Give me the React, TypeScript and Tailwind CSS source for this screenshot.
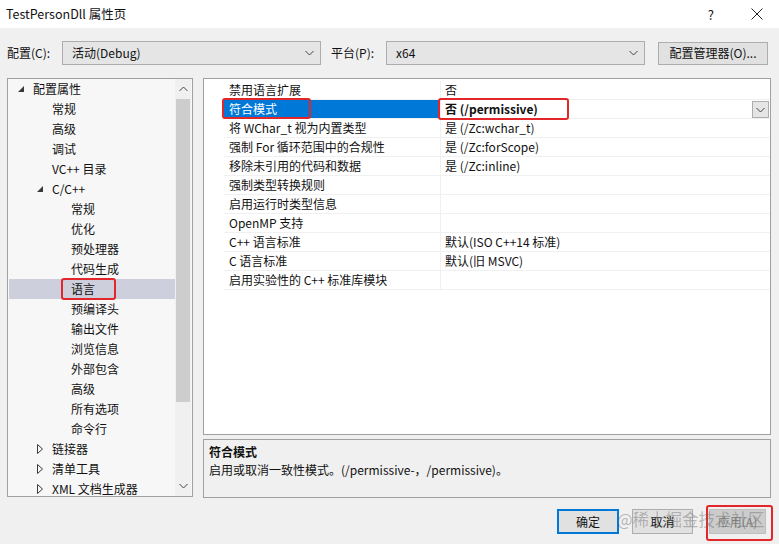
import React from "react";

type TreeItem = { t: string; lvl: number; arrow?: "open" | "closed"; sel?: boolean };

const tree: TreeItem[] = [
  { t: "配置属性", lvl: 0, arrow: "open" },
  { t: "常规", lvl: 1 },
  { t: "高级", lvl: 1 },
  { t: "调试", lvl: 1 },
  { t: "VC++ 目录", lvl: 1 },
  { t: "C/C++", lvl: 1, arrow: "open" },
  { t: "常规", lvl: 2 },
  { t: "优化", lvl: 2 },
  { t: "预处理器", lvl: 2 },
  { t: "代码生成", lvl: 2 },
  { t: "语言", lvl: 2, sel: true },
  { t: "预编译头", lvl: 2 },
  { t: "输出文件", lvl: 2 },
  { t: "浏览信息", lvl: 2 },
  { t: "外部包含", lvl: 2 },
  { t: "高级", lvl: 2 },
  { t: "所有选项", lvl: 2 },
  { t: "命令行", lvl: 2 },
  { t: "链接器", lvl: 1, arrow: "closed" },
  { t: "清单工具", lvl: 1, arrow: "closed" },
  { t: "XML 文档生成器", lvl: 1, arrow: "closed" },
];

const props: { n: string; v: string; sel?: boolean }[] = [
  { n: "禁用语言扩展", v: "否" },
  { n: "符合模式", v: "否 (/permissive)", sel: true },
  { n: "将 WChar_t 视为内置类型", v: "是 (/Zc:wchar_t)" },
  { n: "强制 For 循环范围中的合规性", v: "是 (/Zc:forScope)" },
  { n: "移除未引用的代码和数据", v: "是 (/Zc:inline)" },
  { n: "强制类型转换规则", v: "" },
  { n: "启用运行时类型信息", v: "" },
  { n: "OpenMP 支持", v: "" },
  { n: "C++ 语言标准", v: "默认(ISO C++14 标准)" },
  { n: "C 语言标准", v: "默认(旧 MSVC)" },
  { n: "启用实验性的 C++ 标准库模块", v: "" },
];

function Chevron({ up = false, className = "" }: { up?: boolean; className?: string }) {
  return (
    <svg width="9" height="6" viewBox="0 0 9 6" className={className}>
      <path
        d={up ? "M0.5 5 L4.5 1 L8.5 5" : "M0.5 1 L4.5 5 L8.5 1"}
        fill="none"
        stroke="#444"
        strokeWidth="1"
      />
    </svg>
  );
}

function Combo({ text }: { text: string }) {
  return (
    <div className="w-[259px] h-[24px] bg-[#e5e5e5] border border-[#adadad] flex items-center justify-between pl-[9px] pr-[6px]">
      <span>{text}</span>
      <Chevron />
    </div>
  );
}

export default function App() {
  return (
    <div className="relative w-[779px] h-[544px] bg-[#f0f0f0] overflow-hidden text-[12px] text-[#111] font-['Noto_Sans_CJK_SC','Noto_Sans',sans-serif] leading-none">
      {/* Title bar */}
      <div className="h-[28px] bg-white flex items-center pl-[6px]">
        <span className="text-[12.5px] flex-1">TestPersonDll 属性页</span>
        <span className="text-[13px] mr-[37px]">?</span>
        <svg width="12" height="12" viewBox="0 0 12 12" className="mr-[16px]">
          <path d="M0.5 0.5 L11.5 11.5 M11.5 0.5 L0.5 11.5" stroke="#222" strokeWidth="1" />
        </svg>
      </div>

      {/* Toolbar */}
      <div className="mt-[13px] h-[24px] flex items-center pl-[7px]">
        <span className="w-[55px]">配置(C):</span>
        <Combo text="活动(Debug)" />
        <span className="ml-[10px] w-[55px]">平台(P):</span>
        <Combo text="x64" />
        <div className="ml-[13px] w-[110px] h-[23px] bg-[#e1e1e1] border border-[#adadad] flex items-center justify-center">
          配置管理器(O)...
        </div>
      </div>

      {/* Main */}
      <div className="mt-[13px] flex pl-[7px]">
        {/* Tree */}
        <div className="w-[186px] h-[419px] border border-[#a0a0a0] bg-[#f7f7f7] flex overflow-hidden">
          <div className="flex-1 flex flex-col pl-[1px] overflow-hidden">
            {tree.map((it, i) => (
              <div
                key={i}
                className={`h-[20px] shrink-0 flex items-center ${it.sel ? "bg-[#cdd0dc]" : ""}`}
              >
                <div style={{ width: 9 + it.lvl * 19 }} className="shrink-0" />
                <div className="w-[15px] shrink-0 flex items-center">
                  {it.arrow === "open" && (
                    <svg width="6" height="6" viewBox="0 0 6 6">
                      <polygon points="6,0 6,6 0,6" fill="#3a3a3a" />
                    </svg>
                  )}
                  {it.arrow === "closed" && (
                    <svg width="6" height="10" viewBox="0 0 6 10">
                      <polygon points="0.5,0.5 5.5,5 0.5,9.5" fill="none" stroke="#3a3a3a" strokeWidth="1" />
                    </svg>
                  )}
                </div>
                <span className="whitespace-nowrap">{it.t}</span>
              </div>
            ))}
          </div>
          {/* Scrollbar */}
          <div className="w-[16px] shrink-0 bg-[#f0f0f0] flex flex-col items-stretch mr-[1px]">
            <div className="h-[20px] flex items-center justify-center">
              <Chevron up />
            </div>
            <div className="h-[303px] bg-[#cdcdcd] mx-[1px]" />
            <div className="flex-1" />
            <div className="h-[20px] flex items-center justify-center">
              <Chevron />
            </div>
          </div>
        </div>

        {/* Right column */}
        <div className="ml-[10px] w-[568px] flex flex-col">
          <div className="h-[357px] border border-[#a0a0a0] bg-white flex flex-col pt-[2px]">
            {props.map((p, i) => (
              <div key={i} className="h-[19px] shrink-0 flex">
                <div className="w-[20px] shrink-0" />
                <div
                  className={`w-[216px] shrink-0 flex items-center pl-[5px] border-b border-[#f0f0f0] ${
                    p.sel ? "bg-[#0078d7] text-white border-[#0078d7]" : ""
                  }`}
                >
                  <span className="whitespace-nowrap">{p.n}</span>
                </div>
                <div className="flex-1 flex items-center pl-[4px] border-b border-l border-[#f0f0f0] relative">
                  <span className={`whitespace-nowrap ${p.sel ? "font-bold" : ""}`}>{p.v}</span>
                  {p.sel && (
                    <div className="absolute right-[1px] top-[1px] w-[17px] h-[17px] bg-[#e5e5e5] border border-[#adadad] flex items-center justify-center">
                      <Chevron />
                    </div>
                  )}
                </div>
              </div>
            ))}
          </div>
          <div className="mt-[4px] h-[59px] border border-[#a0a0a0] bg-[#f0f0f0] pl-[5px] pt-[6px] flex flex-col gap-[6px]">
            <span className="font-bold">符合模式</span>
            <span>启用或取消一致性模式。(/permissive-，/permissive)。</span>
          </div>
        </div>
      </div>

      {/* Buttons */}
      <div className="mt-[11px] flex justify-end pr-[13px] h-[25px]">
        <div className="w-[62px] h-[25px] bg-[#e1e1e1] border-2 border-[#0078d7] flex items-center justify-center">
          确定
        </div>
        <div className="ml-[13px] w-[61px] h-[25px] bg-[#e1e1e1] border border-[#adadad] flex items-center justify-center">
          取消
        </div>
        <div className="ml-[16px] w-[57px] h-[25px] bg-[#cccccc] border border-[#bfbfbf] flex items-center justify-center text-[#838383]">
          应用(A)
        </div>
      </div>

      {/* Annotations */}
      <div className="absolute left-[61px] top-[278px] w-[55px] h-[22px] border-2 border-[#e3262a] rounded-[3px]" />
      <div className="absolute left-[222px] top-[98px] w-[89px] h-[21px] border-2 border-[#e3262a] rounded-[3px]" />
      <div className="absolute left-[438px] top-[98px] w-[131px] h-[22px] border-2 border-[#e3262a] rounded-[3px]" />
      <div className="absolute left-[706px] top-[505px] w-[67px] h-[36px] border-2 border-[#e3262a] rounded-[3px]" />

      {/* Watermark */}
      <div className="absolute left-[617px] top-[511px] text-[16.5px] whitespace-nowrap text-[rgba(110,110,110,0.45)]">
        @稀土掘金技术社区
      </div>
    </div>
  );
}
